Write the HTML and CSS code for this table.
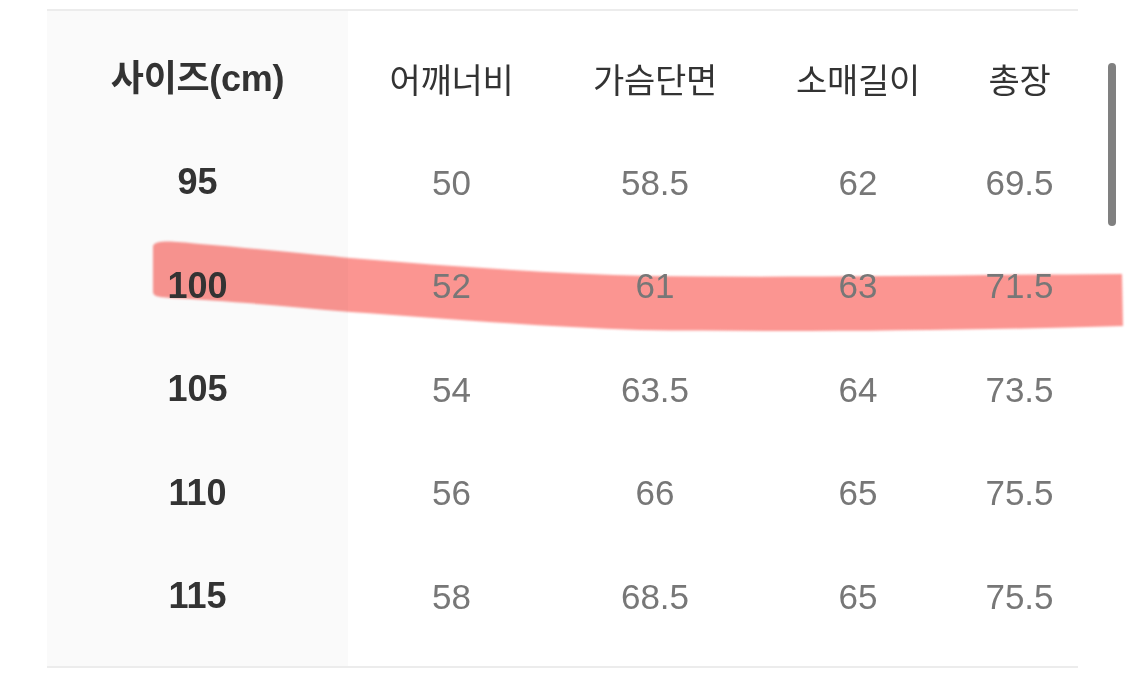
FILE: index.html
```html
<!DOCTYPE html>
<html lang="ko">
<head>
<meta charset="utf-8">
<title>사이즈표</title>
<link rel="stylesheet" href="styles.css">
</head>
<body>
<div class="page">
  <div class="size-table">
    <div class="cell key head">사이즈(cm)</div>
    <div class="cell head">어깨너비</div>
    <div class="cell head">가슴단면</div>
    <div class="cell head">소매길이</div>
    <div class="cell head">총장</div>

    <div class="cell key">95</div>
    <div class="cell">50</div>
    <div class="cell">58.5</div>
    <div class="cell">62</div>
    <div class="cell">69.5</div>

    <div class="cell key">100</div>
    <div class="cell">52</div>
    <div class="cell">61</div>
    <div class="cell">63</div>
    <div class="cell">71.5</div>

    <div class="cell key">105</div>
    <div class="cell">54</div>
    <div class="cell">63.5</div>
    <div class="cell">64</div>
    <div class="cell">73.5</div>

    <div class="cell key">110</div>
    <div class="cell">56</div>
    <div class="cell">66</div>
    <div class="cell">65</div>
    <div class="cell">75.5</div>

    <div class="cell key">115</div>
    <div class="cell">58</div>
    <div class="cell">68.5</div>
    <div class="cell">65</div>
    <div class="cell">75.5</div>
  </div>
</div>
<div class="scrollbar"></div>
<svg class="marker" width="1125" height="681" viewBox="0 0 1125 681">
  <path d="M153,246 C156,240 170,241 200,244 C260,249 310,254 350,258 C450,266 550,274 650,276 C800,278 950,275 1122,274 L1123,326 C950,331 780,332 640,330 C540,327 440,318 350,312 C290,307 220,300 170,298 C158,297 153,296 153,292 Z"/>
</svg>
</body>
</html>
```

FILE: styles.css
```css
html, body {
  margin: 0;
  padding: 0;
  background: #ffffff;
}

.page {
  padding: 9px 0 0 47px;
}

.size-table {
  width: 1031px;
  display: grid;
  grid-template-columns: 301px 207px 200px 206px 117px;
  grid-auto-rows: 103.5px;
  padding: 16px 0 18px 0;
  border-top: 2px solid #ececec;
  border-bottom: 2px solid #ececec;
  font-family: "Liberation Sans", "Noto Sans CJK KR", sans-serif;
  font-size: 35px;
  line-height: 1;
  color: #777777;
  position: relative;
}

.size-table::before {
  content: "";
  position: absolute;
  left: 0;
  top: 0;
  bottom: 0;
  width: 301px;
  background: #fafafa;
  z-index: 0;
}

.cell {
  position: relative;
  z-index: 1;
  display: flex;
  align-items: center;
  justify-content: center;
}

.head {
  font-family: "Noto Sans CJK KR", "Liberation Sans", sans-serif;
  font-size: 34px;
  color: #333333;
  letter-spacing: -0.3px;
}

.key {
  font-weight: bold;
  font-size: 36px;
  color: #333333;
}

.key.head {
  font-family: "Liberation Sans", "Noto Sans CJK KR", sans-serif;
  font-size: 36px;
  letter-spacing: -0.3px;
}

.scrollbar {
  position: absolute;
  left: 1108px;
  top: 63px;
  width: 8px;
  height: 163px;
  border-radius: 4px;
  background: #808080;
}

.marker {
  position: absolute;
  left: 0;
  top: 0;
  pointer-events: none;
  mix-blend-mode: multiply;
  filter: blur(0.9px);
}

.marker path {
  fill: #fb9591;
}
```
